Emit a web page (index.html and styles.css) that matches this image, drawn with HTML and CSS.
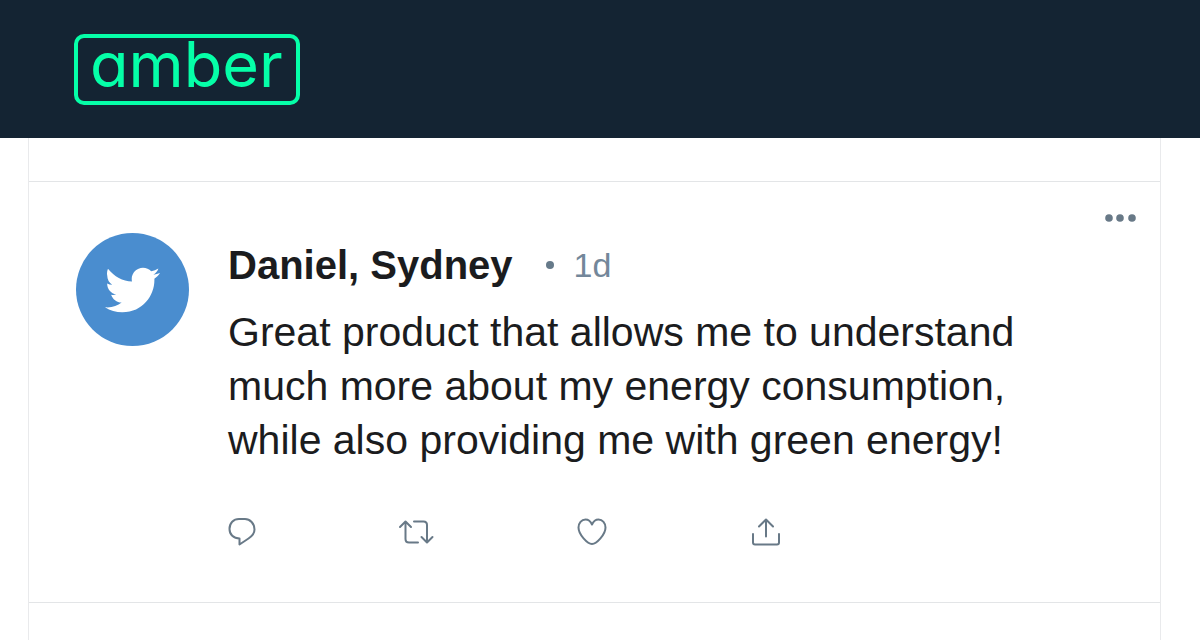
FILE: index.html
```html
<!DOCTYPE html>
<html lang="en">
<head>
<meta charset="utf-8">
<meta name="viewport" content="width=device-width, initial-scale=1">
<title>Amber</title>
<link rel="stylesheet" href="styles.css">
</head>
<body>
<header class="header">
  <a class="logo" href="#">amber</a>
</header>
<main class="feed">
  <article class="post">
    <div class="avatar">
      <svg class="bird" viewBox="0 2 24 20" aria-hidden="true"><path d="M23.954 4.569c-.885.389-1.83.654-2.825.775 1.014-.611 1.794-1.574 2.163-2.723-.951.555-2.005.959-3.127 1.184-.896-.959-2.173-1.559-3.591-1.559-2.717 0-4.92 2.203-4.92 4.917 0 .39.045.765.127 1.124C7.691 8.094 4.066 6.13 1.300 2.700c-.427.922-.526 1.961-.326 2.936 0 1.710.87 3.213 2.188 4.096-.807-.026-1.566-.248-2.228-.616v.061c0 2.385 1.693 4.374 3.946 4.827-.413.111-.849.171-1.296.171-.314 0-.615-.03-.916-.086.631 1.953 2.445 3.377 4.604 3.417-1.680 1.319-3.809 2.105-6.102 2.105-.39 0-.779-.023-1.170-.067 2.189 1.394 4.768 2.209 7.557 2.209 9.054 0 13.999-7.496 13.999-13.986 0-.209 0-.42-.015-.63.961-.689 1.800-1.560 2.460-2.548z"/></svg>
    </div>
    <div class="content">
      <div class="meta">
        <h2 class="name">Daniel, Sydney</h2>
        <span class="dot"></span>
        <time class="time">1d</time>
      </div>
      <p class="text">Great product that allows me to understand much more about my energy consumption, while also providing me with green energy!</p>
      <div class="actions">
        <button class="action" type="button" aria-label="Reply">
          <svg class="icon" viewBox="0 0 36 32"><path d="M11 3H17C22 3 26.500 7.500 26.500 13.500C26.500 18 23.500 20.500 20.500 22.500L11.500 28.500V22.500C5.500 22.500 1.500 18.500 1.500 13C1.500 7 5.500 3 11 3Z"/></svg>
        </button>
        <button class="action" type="button" aria-label="Repost">
          <svg class="icon" viewBox="4 0 36 32"><path d="M2 11L7.500 5.500L13 11M7.500 6V23Q7.500 26.500 11 26.500H20M16 5.500H25.500Q29 5.500 29 9V26M23.500 21L29 26.500L34.500 21"/></svg>
        </button>
        <button class="action" type="button" aria-label="Like">
          <svg class="icon" viewBox="0 0 36 32"><path d="M16 28C11.500 28 2.500 18.500 2.500 11.500C2.500 7 5.500 3.500 9.500 3.500C12.500 3.500 14.500 5 16 8.500C17.500 5 19.500 3.500 22.500 3.500C26.500 3.500 29.500 7 29.500 11.500C29.500 18.500 20.500 28 16 28Z"/></svg>
        </button>
        <button class="action" type="button" aria-label="Share">
          <svg class="icon" viewBox="0 0 36 32"><path d="M9 10.500L16 3.500L23 10.500M16 4V20.500M3 18V26.500Q3 28.500 5 28.500H27Q29 28.500 29 26.500V18"/></svg>
        </button>
      </div>
    </div>
    <button class="more" type="button" aria-label="More">
      <svg class="more-icon" viewBox="0 0 32 8"><circle cx="4" cy="4" r="3.800"/><circle cx="15" cy="4" r="3.800"/><circle cx="27" cy="4" r="3.800"/></svg>
    </button>
  </article>
</main>
</body>
</html>
```
FILE: styles.css
```css
* {
  box-sizing: border-box;
}

body {
  display: flex;
  flex-direction: column;
  min-height: 100vh;
  margin: 0;
  background: #fff;
  color: #1b1c1e;
  font-family: "Liberation Sans", Arial, sans-serif;
}

button {
  padding: 0;
  border: 0;
  background: none;
  color: inherit;
  cursor: pointer;
}

svg {
  display: block;
}

.header {
  padding: 34px 74px 33px;
  background: #142433;
}

.logo {
  display: inline-block;
  padding: 0 13px 10px 12px;
  border: 4px solid #05ffa8;
  border-radius: 10px;
  color: #05ffa8;
  font-family: Inter, sans-serif;
  font-size: 63px;
  font-weight: 400;
  font-feature-settings: "cv11";
  line-height: 53px;
  text-decoration: none;
  vertical-align: top;
}

.feed {
  flex: 1;
  margin: 0 39px 0 28px;
  padding-top: 43px;
  border: solid #e9eaec;
  border-width: 0 1px;
}

.post {
  position: relative;
  display: flex;
  gap: 39px;
  padding: 51px 48px 54px 47px;
  border: solid #e3e5e7;
  border-width: 1px 0;
}

.avatar {
  display: grid;
  flex: none;
  place-items: center;
  width: 113px;
  height: 113px;
  border-radius: 50%;
  background: #4a8dcf;
}

.bird {
  width: 55px;
  height: 46px;
  fill: #fff;
}

.content {
  flex: 1;
  padding-top: 8px;
}

.meta {
  display: flex;
  align-items: center;
}

.name {
  margin: 0;
  font-size: 40px;
  line-height: 48px;
}

.dot {
  width: 8px;
  height: 8px;
  margin: 0 20px 0 33px;
  border-radius: 50%;
  background: #667a8a;
}

.time {
  color: #73879a;
  font-size: 34px;
  line-height: 48px;
}

.text {
  max-width: 820px;
  margin: 16px 0 0;
  font-size: 41px;
  line-height: 54px;
}

.actions {
  display: flex;
  gap: 138px;
  margin-top: 49px;
  color: #687987;
}

.icon {
  width: 36px;
  height: 32px;
  overflow: visible;
  fill: none;
  stroke: currentColor;
  stroke-linecap: round;
  stroke-linejoin: round;
  stroke-width: 2;
}

.more {
  position: absolute;
  top: 32px;
  right: 23px;
  color: #687987;
}

.more-icon {
  width: 32px;
  height: 8px;
  fill: currentColor;
}
```
